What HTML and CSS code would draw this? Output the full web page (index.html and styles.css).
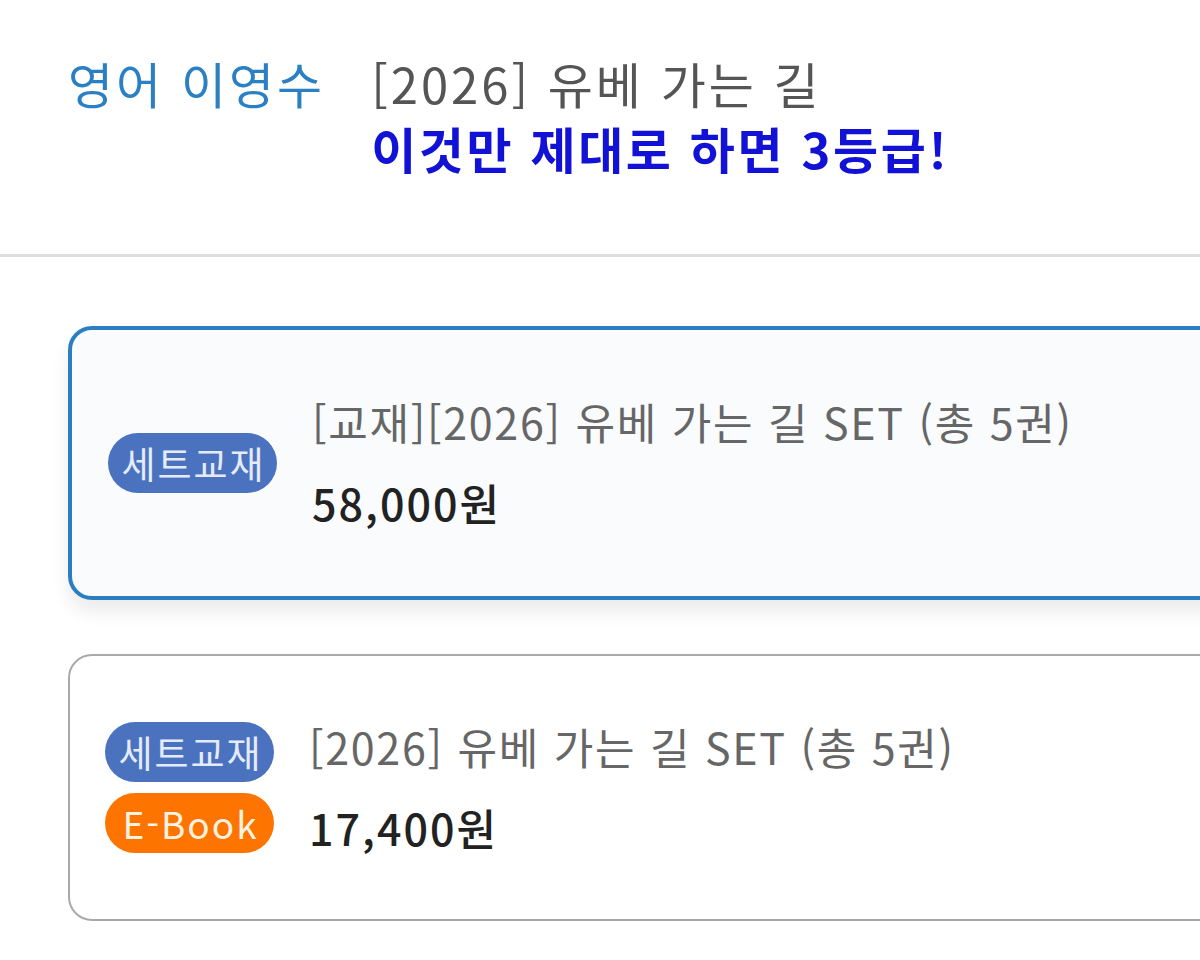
FILE: index.html
```html
<!DOCTYPE html>
<html lang="ko">
<head>
<meta charset="utf-8">
<link rel="stylesheet" href="styles.css">
</head>
<body>
  <header class="head">
    <div class="teacher">영어 이영수</div>
    <div class="course">
      <div class="course-title">[2026] 유베 가는 길</div>
      <div class="course-sub">이것만 제대로 하면 3등급!</div>
    </div>
  </header>
  <div class="divider"></div>
  <main class="list">
    <div class="card card-active">
      <div class="badges">
        <span class="badge badge-set">세트교재</span>
      </div>
      <div class="info">
        <div class="title">[교재][2026] 유베 가는 길 SET (총 5권)</div>
        <div class="price">58,000원</div>
      </div>
    </div>
    <div class="card card-plain">
      <div class="badges">
        <span class="badge badge-set">세트교재</span>
        <span class="badge badge-ebook">E-Book</span>
      </div>
      <div class="info">
        <div class="title">[2026] 유베 가는 길 SET (총 5권)</div>
        <div class="price">17,400원</div>
      </div>
    </div>
  </main>
</body>
</html>
```
FILE: styles.css
```css
* { box-sizing: border-box; }
html, body {
  margin: 0;
  padding: 0;
  background: #ffffff;
  overflow: hidden;
}
body {
  font-family: "Noto Sans CJK KR", "Noto Sans", sans-serif;
  width: 1200px;
  height: 960px;
}
.head {
  display: flex;
  align-items: flex-start;
  gap: 46px;
  padding: 50px 0 0 68px;
  height: 254px;
}
.teacher {
  font-size: 49px;
  line-height: 66px;
  color: #2b80c4;
  letter-spacing: 3px;
}
.course {
  display: flex;
  flex-direction: column;
}
.course-title {
  font-size: 49px;
  line-height: 66px;
  color: #555555;
  letter-spacing: 3px;
}
.course-sub {
  font-size: 49px;
  line-height: 64px;
  font-weight: 700;
  color: #1212d6;
  letter-spacing: 2.6px;
}
.divider {
  height: 3px;
  background: #dddddd;
}
.list {
  display: flex;
  flex-direction: column;
  gap: 54px;
  padding: 69px 0 0 68px;
}
.card {
  width: 1200px;
  display: flex;
  align-items: center;
  gap: 35px;
  border-radius: 24px;
}
.card-active {
  border: 4px solid #2b7fc1;
  background: #f9fbfd;
  height: 274px;
  padding-left: 36px;
  box-shadow: 0 12px 18px rgba(0, 0, 0, 0.08);
}
.card-plain {
  border: 2px solid #a9a9a9;
  background: #ffffff;
  height: 267px;
  padding-left: 35px;
}
.badges {
  display: flex;
  flex-direction: column;
  gap: 11px;
  width: 169px;
  flex: none;
}
.badge {
  display: flex;
  align-items: center;
  justify-content: center;
  height: 60px;
  border-radius: 30px;
  font-size: 37px;
  letter-spacing: 2px;
  padding-left: 2px;
}
.badge-set { background: #4b72bf; color: #e4ebfb; }
.badge-ebook { background: #fe7400; color: #fff2e0; }
.info {
  display: flex;
  flex-direction: column;
  gap: 22px;
}
.title {
  font-size: 43px;
  line-height: 56px;
  color: #666666;
  letter-spacing: 1.7px;
  white-space: nowrap;
  margin-top: -3px;
  margin-bottom: 3px;
}
.price {
  font-size: 43px;
  line-height: 56px;
  font-weight: 500;
  color: #222222;
  letter-spacing: 2px;
}
```
